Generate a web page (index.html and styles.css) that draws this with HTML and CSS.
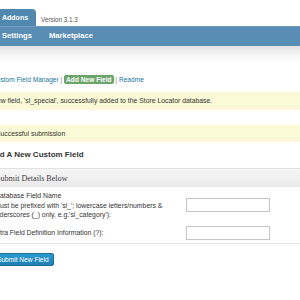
FILE: index.html
```html
<!DOCTYPE html>
<html lang="en">
<head>
    <meta charset="UTF-8">
    <title>Store Locator Plus - Custom Fields</title>
    <link rel="stylesheet" href="styles.css">
</head>
<body>
    <div class="wrap">
        <div class="tabs">
            <span class="tab">Addons</span>
            <span class="version">Version 3.1.3</span>
        </div>
        <div class="nav">
            <a class="nav-item">Settings</a>
            <a class="nav-item">Marketplace</a>
        </div>
        <div class="nav-shade"></div>

        <p class="sublinks"><a>Custom Field Manager</a> | <a class="current">Add New Field</a> | <a>Readme</a></p>

        <div class="notice notice-added">New field, 'sl_special', successfully added to the Store Locator database.</div>
        <div class="notice notice-ok">Successful submission</div>

        <h2 class="page-title">Add A New Custom Field</h2>

        <div class="box">
            <h3 class="box-title">Submit Details Below</h3>
            <div class="form-row">
                <label class="field-label">
                    <span class="field-name">Database Field Name</span>
                    (must be prefixed with 'sl_'; lowercase letters/numbers &amp;<br>underscores (_) only, e.g.'sl_category'):
                </label>
                <input type="text" class="field-input">
            </div>
            <div class="form-row">
                <label class="field-label">Extra Field Definition Information (?):</label>
                <input type="text" class="field-input">
            </div>
        </div>

        <button class="button-primary">Submit New Field</button>
    </div>
</body>
</html>
```

FILE: styles.css
```css
* { margin: 0; padding: 0; box-sizing: border-box; }
html, body { width: 300px; height: 300px; overflow: hidden; background: #fff; }
body { font-family: 'Liberation Sans', Arial, sans-serif; font-size: 6.85px; color: #333; }

.wrap { margin-left: -8px; width: 308px; }

/* tabs + blue nav bar */
.tabs { height: 26px; display: flex; align-items: flex-end; }
.tab { height: 17px; line-height: 17px; padding: 0 8px 0 10px; background: #5088b0; color: #fff; font-weight: bold; font-size: 7px; border-top-right-radius: 4px; }
.version { color: #555; font-size: 6.3px; margin-left: 5px; padding-bottom: 3px; }
.nav { height: 20px; display: flex; gap: 17px; padding-left: 10px; background: #5a8db3; border-top: 1px solid #6f9cbf; }
.nav-item { color: #fff; font-weight: bold; font-size: 7.6px; line-height: 18px; }
.nav-shade { height: 16px; background: linear-gradient(#e4e4e4, #f6f6f6 60%, #fff); }

/* sub menu */
.sublinks { margin-top: 13px; line-height: 10px; font-size: 6.6px; color: #777; }
.sublinks a { color: #21759b; }
.sublinks a.current { background: #6aa46a; color: #fff; font-weight: bold; padding: 1px 2px; border-radius: 2px; }

/* notices */
.notice { background: #fafad6; color: #333; }
.notice-added { margin-top: 7px; height: 18px; line-height: 18px; }
.notice-ok { margin-top: 15px; height: 17px; line-height: 17px; padding-left: 4px; }

.page-title { margin: 8px 0 0 -3px; font-size: 8px; line-height: 10px; color: #333; }

/* form box */
.box { margin-top: 8px; border-bottom: 1px solid #e6e6e6; }
.box-title { height: 19px; line-height: 19px; padding-left: 4px; font-family: 'Liberation Serif', 'Times New Roman', serif; font-weight: normal; font-size: 8.1px; color: #444; background: linear-gradient(#f6f6f6, #e9e9e9); border-top: 1px solid #e2e2e2; }
.form-row { display: grid; grid-template-columns: 194px 84px; align-items: center; }
.form-row:first-of-type { padding: 4px 0 4px; }
.form-row + .form-row { padding: 2px 0 3px; }
.field-label { line-height: 9.6px; color: #333; }
.field-name { display: block; padding-left: 3px; }
.field-input { width: 84px; height: 14px; border: 1px solid #c6c6c6; background: #fff; }

.button-primary { margin-top: 9px; height: 13px; padding: 0 4px 0 4px; font-family: inherit; font-size: 6.6px; color: #fff; background: linear-gradient(#2a9bd1, #1f80b4); border: 1px solid #1b6e99; border-radius: 2px; }
```
